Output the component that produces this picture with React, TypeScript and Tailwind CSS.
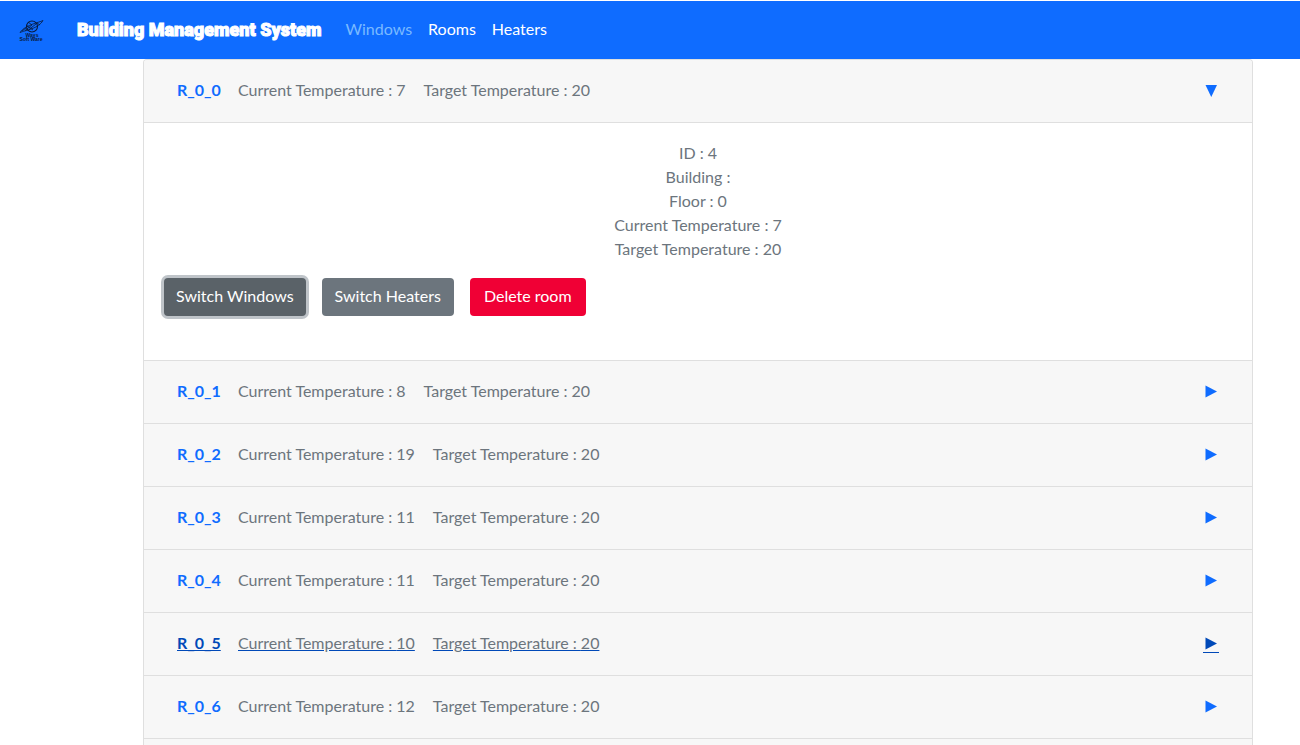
import { useState } from "react";

type Room = { id: number; name: string; floor: number; current: number; target: number };

const initialRooms: Room[] = [7, 8, 19, 11, 11, 10, 12].map((current, i) => ({
  id: i + 4,
  name: `R_0_${i}`,
  floor: 0,
  current,
  target: 20,
}));

function Logo() {
  return (
    <svg viewBox="0 0 30 30" className="size-[30px]" fill="none" stroke="#081a3c" aria-label="Ways Software">
      <circle cx="16" cy="11.5" r="5.5" strokeWidth="1.1" />
      <path d="M4 17.500 C7 13 12 11 17 9 S24 7 27 5.500 C25 9 21 12 15 14 S8 16 4 17.500Z" strokeWidth="0.8" />
      <path d="M6 16l4-3M9 15.500l7-5.500M13 14.500l7-5.500M10 10l7 5M12 7l4 3M21 8l3 2" strokeWidth="0.8" />
      <g fill="#081a3c" stroke="none" fontFamily="Liberation Sans, sans-serif" fontWeight="700" textAnchor="middle">
        <text x="16" y="22" fontSize="5">Ways</text>
        <text x="15" y="26" fontSize="5">Soft Ware</text>
      </g>
    </svg>
  );
}

function Navbar() {
  return (
    <nav className="mt-px flex h-[58px] shrink-0 items-center bg-[#0f6cff] px-4 pb-0.5">
      <a href="#home" className="flex w-[61px] shrink-0 items-center pt-0.5">
        <Logo />
      </a>
      <a
        href="#home"
        className="mr-4 whitespace-nowrap font-['Impact','Roboto',sans-serif] text-[18px] font-black text-white [-webkit-text-stroke:1px_white]"
      >
        Building Management System
      </a>
      <a href="#windows" className="p-2 text-[#7abaff]">Windows</a>
      <a href="#rooms" className="p-2 text-white">Rooms</a>
      <a href="#heaters" className="p-2 text-white">Heaters</a>
    </nav>
  );
}

function Arrow({ open }: { open: boolean }) {
  return (
    <svg viewBox="0 0 16 18" className="h-[18px] w-4" fill="currentColor" aria-hidden="true">
      {open ? <path d="M2.500 4h11.500L8.250 16z" /> : <path d="M2.500 3.500v12l11.500-6z" />}
    </svg>
  );
}

function RoomItem({ room, open, active, onToggle }: { room: Room; open: boolean; active: boolean; onToggle: () => void }) {
  const line = active ? "underline decoration-[#0049b8]" : "";
  const accent = active ? "text-[#0049b8]" : "text-[#0f6cff]";
  const arrowLine = active ? "border-[#0049b8]" : "border-transparent";
  return (
    <li className="border-b border-[#dfdfdf]">
      <button
        type="button"
        aria-expanded={open}
        onClick={onToggle}
        className="flex h-[62px] w-full cursor-pointer items-center bg-[#f7f7f7] px-[33px] pb-0.5 text-left"
      >
        <span className={`mr-4 min-w-[45px] font-bold ${accent} ${line}`}>{room.name}</span>
        <span className={`mr-[18px] ${line}`}>Current Temperature : {room.current}</span>
        <span className={line}>Target Temperature : {room.target}</span>
        <span className={`ml-auto border-b ${accent} ${arrowLine}`}>
          <Arrow open={open} />
        </span>
      </button>
      {open && (
        <div className="border-t border-[#dfdfdf] bg-white px-5 pt-[18px] pb-11">
          <div className="text-center">
            <p>ID : {room.id}</p>
            <p>Building :</p>
            <p>Floor : {room.floor}</p>
            <p>Current Temperature : {room.current}</p>
            <p>Target Temperature : {room.target}</p>
          </div>
          <div className="mt-[17px] flex gap-4 text-white">
            <button type="button" className="h-[38px] rounded-sm bg-[#5a6268] px-3 pb-0.5 ring-3 ring-[#bfc4c9]">
              Switch Windows
            </button>
            <button type="button" className="h-[38px] rounded-sm bg-[#6c757d] px-[13px] pb-0.5">Switch Heaters</button>
            <button type="button" className="h-[38px] rounded-sm bg-[#f00035] px-[14px] pb-0.5">Delete room</button>
          </div>
        </div>
      )}
    </li>
  );
}

export default function App() {
  const [openId, setOpenId] = useState<number | null>(4);
  return (
    <div className="flex min-h-screen flex-col bg-white font-['Avenir','Lato',sans-serif] text-base text-[#6c757d]">
      <Navbar />
      <main className="flex flex-1 pl-24">
        <ul className="mx-auto w-full max-w-[1110px] overflow-hidden rounded-t-sm border border-b-0 border-[#dfdfdf] bg-[#f7f7f7]">
          {initialRooms.map((room) => (
            <RoomItem
              key={room.id}
              room={room}
              open={openId === room.id}
              active={room.name === "R_0_5"}
              onToggle={() => setOpenId(openId === room.id ? null : room.id)}
            />
          ))}
        </ul>
      </main>
    </div>
  );
}
